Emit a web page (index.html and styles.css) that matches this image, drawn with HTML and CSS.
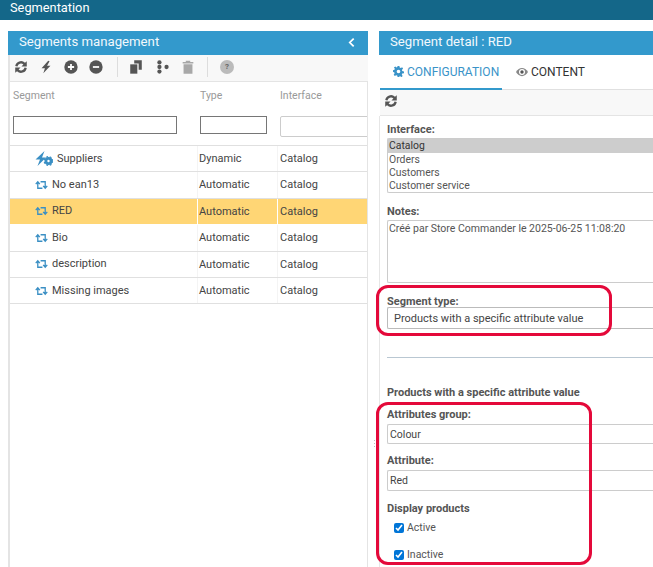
FILE: index.html
```html
<!DOCTYPE html>
<html lang="en">
<head>
<meta charset="utf-8">
<title>Segmentation</title>
<link rel="stylesheet" href="styles.css">
</head>
<body>
<header class="appbar">Segmentation</header>
<main class="workspace">
  <section class="panel panel-left">
    <div class="panel-head"><span>Segments management</span>
      <svg class="chev" viewBox="0 0 8 12" width="7" height="11"><path d="M6.500 1.500 2 6l4.500 4.500" fill="none" stroke="#fff" stroke-width="2"/></svg>
    </div>
    <div class="toolbar">
      <svg class="ic" viewBox="-1 -1 18 18"><path d="M1.500 7a6.500 6.500 0 0 1 11-3.700L14.500 1.500V7.500H8.500l2.200-2.200A4 4 0 0 0 4 7.300zM14.500 9a6.500 6.500 0 0 1-11 3.700L1.500 14.500V8.500H7.500L5.300 10.700A4 4 0 0 0 12 8.700z" fill="#555"/></svg>
      <svg class="ic" viewBox="-1 -1 18 18"><path d="M10.500 1 3 9.500H6.800L5 15 13 6.500H9.200L12 1.500z" fill="#555"/></svg>
      <svg class="ic" viewBox="-1 -1 18 18"><circle cx="8" cy="8" r="7.500" fill="#555"/><path d="M8 4.500v7M4.500 8h7" stroke="#fff" stroke-width="2"/></svg>
      <svg class="ic" viewBox="-1 -1 18 18"><circle cx="8" cy="8" r="7.500" fill="#555"/><path d="M4.500 8h7" stroke="#fff" stroke-width="2"/></svg>
      <i class="sep"></i>
      <svg class="ic ic-wide" viewBox="-1 -1 18 18"><path d="M6 .500h8.500V11H11V4H6z" fill="#555"/><path d="M1.500 5H9.500V15.500H1.500z" fill="#555"/></svg>
      <svg class="ic" viewBox="-1 -1 18 18"><g fill="#555"><circle cx="4" cy="2.800" r="2.400"/><circle cx="4" cy="8" r="2.400"/><circle cx="4" cy="13.200" r="2.400"/><circle cx="12" cy="8" r="2.400"/></g></svg>
      <svg class="ic ic-last" viewBox="-1 -1 18 18"><path d="M2 2.500H14V4.200H2zM5.500 1h5v1.500h-5zM3 5H13V15.500H3z" fill="#a8a8a8"/></svg>
      <i class="sep"></i>
      <span class="help">?</span>
    </div>
    <div class="grid">
      <div class="grid-head">
        <div class="row-labels"><span class="c1">Segment</span><span class="c2">Type</span><span class="c3">Interface</span></div>
        <div class="row-filters"><span class="c1"><input class="filter f1" type="text"></span><span class="c2"><input class="filter f2" type="text"></span><span class="c3"><input class="filter f3" type="text"></span></div>
      </div>
      <div class="row"><span class="c1 name"><svg class="ic-dyn" viewBox="0 0 18 15"><path d="M9.500 0 .500 8.500h4.500L2.500 15l8.500-8.500H7z" fill="#3a8fc4"/><circle cx="13.500" cy="10" r="2.600" fill="none" stroke="#3a8fc4" stroke-width="2.800"/><circle cx="13.500" cy="10" r="4.300" fill="none" stroke="#3a8fc4" stroke-width="1.200" stroke-dasharray="1.800 1.700"/></svg>Suppliers</span><span class="c2">Dynamic</span><span class="c3">Catalog</span></div>
      <div class="row"><span class="c1 name"><svg class="ic-auto" viewBox="0 0 14 10"><path d="M3 2V8.500H8M11 8V1.500H6M.800 4 3 1.500 5.200 4M8.800 6 11 8.500 13.200 6" fill="none" stroke="#3a8fc4" stroke-width="1.400"/></svg>No ean13</span><span class="c2">Automatic</span><span class="c3">Catalog</span></div>
      <div class="row selected"><span class="c1 name"><svg class="ic-auto" viewBox="0 0 14 10"><path d="M3 2V8.500H8M11 8V1.500H6M.800 4 3 1.500 5.200 4M8.800 6 11 8.500 13.200 6" fill="none" stroke="#3a8fc4" stroke-width="1.400"/></svg>RED</span><span class="c2">Automatic</span><span class="c3">Catalog</span></div>
      <div class="row"><span class="c1 name"><svg class="ic-auto" viewBox="0 0 14 10"><path d="M3 2V8.500H8M11 8V1.500H6M.800 4 3 1.500 5.200 4M8.800 6 11 8.500 13.200 6" fill="none" stroke="#3a8fc4" stroke-width="1.400"/></svg>Bio</span><span class="c2">Automatic</span><span class="c3">Catalog</span></div>
      <div class="row"><span class="c1 name"><svg class="ic-auto" viewBox="0 0 14 10"><path d="M3 2V8.500H8M11 8V1.500H6M.800 4 3 1.500 5.200 4M8.800 6 11 8.500 13.200 6" fill="none" stroke="#3a8fc4" stroke-width="1.400"/></svg>description</span><span class="c2">Automatic</span><span class="c3">Catalog</span></div>
      <div class="row"><span class="c1 name"><svg class="ic-auto" viewBox="0 0 14 10"><path d="M3 2V8.500H8M11 8V1.500H6M.800 4 3 1.500 5.200 4M8.800 6 11 8.500 13.200 6" fill="none" stroke="#3a8fc4" stroke-width="1.400"/></svg>Missing images</span><span class="c2">Automatic</span><span class="c3">Catalog</span></div>
    </div>
  </section>
  <section class="panel panel-right">
    <div class="panel-head"><span>Segment detail : RED</span></div>
    <div class="tabs">
      <div class="tab active"><svg class="tab-ic" viewBox="0 0 12 12"><path d="M5 0h2l.300 1.700 1.200.500L10 1.300 11 3l-1.200 1.200.2 1.300 2 .500v2l-2 .3-.4 1.200 1 1.500-1.500 1.200L7.300 10.500 7 12H5l-.4-1.600-1.200-.4L2 11 .700 9.500l1-1.400-.4-1.200L0 6.500v-2l1.600-.300.4-1.200-1-1.400L2.500.500 4 1.500l.7-.3zM6 4a2 2 0 1 0 0 4 2 2 0 0 0 0-4z" fill="#3a93c8" fill-rule="evenodd"/></svg>CONFIGURATION</div>
      <div class="tab tab-2"><svg class="tab-ic eye" viewBox="0 0 12 10"><path d="M0 5c3-5.500 9-5.500 12 0-3 5.500-9 5.500-12 0z" fill="#888"/><circle cx="6" cy="5" r="3" fill="#fff"/><circle cx="6" cy="5" r="1.700" fill="#555"/></svg>CONTENT</div>
    </div>
    <div class="subtool"><svg class="ic" viewBox="-1 -1 18 18"><path d="M1.500 7a6.500 6.500 0 0 1 11-3.700L14.500 1.500V7.500H8.500l2.200-2.200A4 4 0 0 0 4 7.300zM14.500 9a6.500 6.500 0 0 1-11 3.700L1.500 14.500V8.500H7.500L5.300 10.700A4 4 0 0 0 12 8.700z" fill="#555"/></svg></div>
    <div class="form">
      <div class="label">Interface:</div>
      <div class="listbox"><div class="opt sel">Catalog</div><div class="opt">Orders</div><div class="opt">Customers</div><div class="opt">Customer service</div></div>
      <div class="label l-notes">Notes:</div>
      <div class="notes">Créé par Store Commander le 2025-06-25 11:08:20</div>
      <div class="type-wrap">
        <div class="label l-type">Segment type:</div>
        <div class="field field-type">Products with a specific attribute value</div>
        <div class="ring ring-type"></div>
      </div>
      <hr class="rule">
      <div class="label l-prod">Products with a specific attribute value</div>
      <div class="attrs">
        <div class="ring ring-attrs"></div>
        <div class="label">Attributes group:</div>
        <div class="field field-select">Colour</div>
        <div class="label l-attr">Attribute:</div>
        <div class="field field-select field-tall">Red</div>
        <div class="label l-disp">Display products</div>
        <label class="check"><input type="checkbox" checked>Active</label>
        <label class="check check-2"><input type="checkbox" checked>Inactive</label>
      </div>
    </div>
    <div class="handle"></div>
  </section>
</main>
</body>
</html>
```

FILE: styles.css
```css
* { box-sizing: border-box; }
html, body { margin: 0; height: 100%; overflow: hidden; background: #fff; }
body { width: 653px; height: 567px; font: 11px/14px "Roboto", "Liberation Sans", sans-serif; color: #444; }
.appbar { height: 20px; padding: 0 10px; background: #146789; color: #fff; font-size: 12.800px; line-height: 15px; }
.workspace { display: flex; gap: 11px; padding: 11px 0 0 8px; height: 547px; }
.panel { flex: none; height: 536px; display: flex; flex-direction: column; position: relative; }
.panel-left { width: 360px; border-left: 2px solid #e4e4e4; }
.panel-right { width: 290px; }
.panel-head { height: 24px; flex: none; margin-left: -2px; padding: 0 13px 2px 11px; background: #3399cc; color: #f2f8fc; font-size: 13.200px; line-height: 22px; display: flex; justify-content: space-between; align-items: center; }
.panel-right .panel-head { margin-left: 0; }
.toolbar { height: 27px; flex: none; padding: 0 0 2px 3px; background: #f8f8f8; display: flex; align-items: center; border-bottom: 1px solid #e4e4e4; }
.ic { width: 16px; height: 16px; flex: none; margin-right: 9px; display: block; }
.ic-wide { margin-right: 11px; }
.ic-last { margin-right: 7px; }
.sep { width: 1px; height: 20px; background: #ddd; margin: 0 10px 0 4px; }
.help { width: 14px; height: 14px; border-radius: 50%; background: #bbb; color: #666; font-size: 8px; font-weight: 700; line-height: 14px; text-align: center; margin-left: 2px; }
.grid { flex: 1; border-right: 1px solid #e4e4e4; overflow: hidden; }
.c1 { width: 187px; flex: none; }
.c2 { width: 80px; flex: none; }
.c3 { flex: 1; min-width: 0; }
.grid-head { height: 64px; border-bottom: 1px solid #e0e0e0; }
.row-labels { display: flex; padding: 7px 0 0 3px; height: 28px; color: #999; font-size: 10.500px; }
.row-filters { display: flex; padding: 6px 0 0 3px; }
.filter { display: block; height: 18px; padding: 0; background: #fff; margin: 0; }
.f1 { width: 164px; border: 1px solid #767676; }
.f2 { width: 67px; border: 1px solid #767676; }
.f3 { width: 100px; border: 1px solid #ccc; border-radius: 2px; height: 21px; }
.row { display: flex; height: 26.400px; align-items: center; border-bottom: 1px solid #e0e0e0; color: #444; font-size: 11px; }
.row .c1 { padding-left: 25px; display: flex; align-items: center; border-right: 1px solid #f4f4f4; height: 100%; width: 188px; }
.row .c2 { padding-left: 1px; border-right: 1px solid #f4f4f4; height: 100%; line-height: 25px; width: 80px; }
.row .c3 { padding-left: 2px; line-height: 25px; height: 100%; }
.selected { background: #ffd675; border-bottom-color: #fff; }
.selected .c1, .selected .c2 { border-right-color: #fff; }
.ic-dyn { width: 18px; height: 15px; margin: 0 4px 0 0; flex: none; }
.ic-auto { width: 13px; height: 10px; margin-right: 4px; flex: none; }
.tabs { height: 35px; flex: none; display: flex; background: #fff; border-bottom: 1px solid #e0e0e0; margin-left: 1px; font-size: 12px; }
.tab { padding: 10px 3px 0 13px; height: 35px; display: flex; align-items: flex-start; color: #333; }
.tab-2 { padding-left: 14px; }
.tab.active { color: #3a93c8; border-bottom: 2px solid #3399cc; width: 122px; }
.tab-ic { width: 11px; height: 11px; margin-right: 3px; margin-top: 1px; flex: none; }
.eye { width: 12px; height: 10px; margin-top: 2px; margin-right: 3px; }
.subtool { height: 26px; flex: none; background: #f8f8f8; border-bottom: 1px solid #e4e4e4; padding: 3px 0 0 3px; margin-left: 1px; }
.form { flex: 1; padding: 7px 0 0 7px; border-left: 1px solid #e6e6e6; font-size: 10.500px; line-height: 13px; color: #555; }
.label { font-weight: 700; font-size: 11px; color: #555; line-height: 13px; height: 13px; }
.listbox { margin-top: 2px; height: 55px; border: 1px solid #ccc; border-right: 0; border-radius: 2px 0 0 2px; }
.opt { height: 13px; padding-left: 1px; font-size: 10.400px; line-height: 13px; }
.opt.sel { height: 14px; background: #cdcdcd; color: #333; line-height: 14px; }
.l-notes { margin-top: 12px; }
.notes { margin-top: 2px; height: 63px; border: 1px solid #ccc; border-right: 0; border-radius: 2px 0 0 2px; padding: 1px; font-size: 10.500px; color: #555; }
.type-wrap { position: relative; margin-top: 12px; }
.field { margin-top: -1px; height: 22px; border: 1px solid #bbb; border-right: 0; border-radius: 2px 0 0 2px; padding-left: 6px; line-height: 21px; font-size: 11px; color: #444; }
.field-select { margin-top: 3px; height: 20px; padding-left: 2px; line-height: 20px; border-color: #ccc; font-size: 10.500px; }
.field-tall { height: 21px; }
.ring { position: absolute; border: 3px solid #e4093a; border-radius: 12px; pointer-events: none; }
.ring-type { left: -11px; top: -10px; width: 236px; height: 51px; }
.rule { margin: 28px 0 0; border: 0; border-top: 1px solid #b9c7d2; height: 0; }
.l-prod { margin-top: 28px; }
.attrs { position: relative; margin-top: 9px; }
.ring-attrs { left: -11px; top: -6px; width: 216px; height: 163px; }
.l-attr { margin-top: 10px; }
.l-disp { margin-top: 11px; }
.check { display: flex; align-items: center; height: 13px; margin: 6px 0 0 7px; font-size: 10.500px; color: #555; }
.check input { width: 10px; height: 10px; margin: 0 3px 0 0; accent-color: #0075d7; }
.check-2 { margin-top: 14px; }
.handle { position: absolute; left: -6px; top: 408px; width: 3px; height: 9px; background: radial-gradient(circle, #bbb 1px, transparent 1px) 0 0 / 3px 3px; }
```
